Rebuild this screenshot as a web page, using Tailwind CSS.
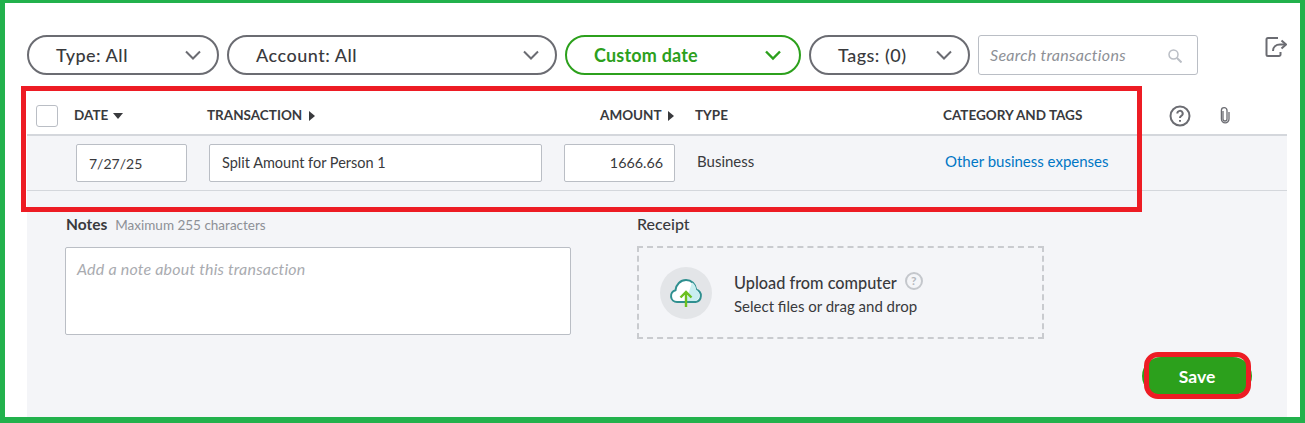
<!DOCTYPE html>
<html>

<head>
    <title>Transactions</title>
    <script src="https://cdn.jsdelivr.net/npm/@tailwindcss/browser@4"></script>
</head>

<body class="bg-white">
    <div class="relative w-[1305px] h-[423px] overflow-hidden flex flex-col bg-white border-t-[3px] border-l-[5px] border-r-[5px] border-b-[6px] border-[#22b14c] font-['Lato',sans-serif] text-[#393a3d]">
        <!-- filter bar -->
        <div class="flex items-start ml-[22px] mt-[32px] h-[40px]">
            <div class="w-[192px] h-[40px] mr-[8px] flex items-center justify-between pl-[27px] pr-[15px] rounded-full border-2 border-[#6b6c72] text-[18px] tracking-[0.5px] font-medium">
                <span>Type: All</span>
                <svg class="w-[18px] h-[18px]" viewBox="0 0 18 18" fill="none" stroke="#6b6c72" stroke-width="2"><path d="M2 5.500l7 7 7-7" /></svg>
            </div>
            <div class="w-[330px] h-[40px] mr-[8px] flex items-center justify-between pl-[27px] pr-[15px] rounded-full border-2 border-[#6b6c72] text-[18px] tracking-[0.5px] font-medium">
                <span>Account: All</span>
                <svg class="w-[18px] h-[18px]" viewBox="0 0 18 18" fill="none" stroke="#6b6c72" stroke-width="2"><path d="M2 5.500l7 7 7-7" /></svg>
            </div>
            <div class="w-[236px] h-[40px] mr-[8px] flex items-center justify-between pl-[27px] pr-[17px] rounded-full border-2 border-[#2ca01c] text-[18px] tracking-[0.2px] font-bold text-[#2ca01c]">
                <span>Custom date</span>
                <svg class="w-[18px] h-[18px]" viewBox="0 0 18 18" fill="none" stroke="#2ca01c" stroke-width="2.400"><path d="M2 5.500l7 7 7-7" /></svg>
            </div>
            <div class="w-[161px] h-[40px] mr-[8px] flex items-center justify-between pl-[27px] pr-[15px] rounded-full border-2 border-[#6b6c72] text-[18px] tracking-[0.5px] font-medium">
                <span>Tags: (0)</span>
                <svg class="w-[18px] h-[18px]" viewBox="0 0 18 18" fill="none" stroke="#6b6c72" stroke-width="2"><path d="M2 5.500l7 7 7-7" /></svg>
            </div>
            <div class="w-[220px] h-[40px] pb-[1px] flex items-center justify-between pl-[11px] pr-[15px] rounded-[3px] border border-[#babec5] text-[16px] tracking-[0.3px] italic text-[#8d9096]">
                <span>Search transactions</span>
                <svg class="w-[14px] h-[14px] mt-[2px]" viewBox="0 0 14 14" fill="none" stroke="#babec5" stroke-width="1.500"><circle cx="5.500" cy="5.500" r="4.500" /><path d="M9 9l4.500 4.500" stroke-width="2" /></svg>
            </div>
            <svg class="w-[22px] h-[22px] ml-[67px] mt-[1px]" viewBox="0 0 22 22" fill="none" stroke="#6b6c72" stroke-width="2"><path d="M13 2H3a1.500 1.500 0 0 0-1.500 1.500v15A1.500 1.500 0 0 0 3 20h11a1.500 1.500 0 0 0 1.500-1.500V16" /><path d="M8 15c0-4 3-6.500 7-6.500h5" /><path d="M16.500 4.500l4.500 4-4.500 4" /></svg>
        </div>

        <!-- table header -->
        <div class="ml-[22px] w-[1260px] h-[61px] pt-[22px] flex items-center border-b-2 border-[#d4d7dc] text-[13.500px] font-bold uppercase">
            <div class="w-[22px] h-[22px] ml-[9px] mr-[16px] rounded-[3px] border border-[#babec5] bg-white"></div>
            <div class="w-[133px] flex items-center gap-[5px]">Date <span class="w-0 h-0 border-x-[5px] border-x-transparent border-t-[6px] border-t-[#393a3d]"></span></div>
            <div class="w-[393px] flex items-center gap-[7px]">Transaction <span class="w-0 h-0 border-y-[5px] border-y-transparent border-l-[6px] border-l-[#393a3d]"></span></div>
            <div class="w-[95px] flex items-center gap-[6px]">Amount <span class="w-0 h-0 border-y-[5px] border-y-transparent border-l-[6px] border-l-[#393a3d]"></span></div>
            <div class="w-[248px]">Type</div>
            <div class="w-[226px] whitespace-nowrap">Category and tags</div>
            <svg class="w-[22px] h-[22px] mr-[27px]" viewBox="0 0 22 22" fill="none" stroke="#6b6c72" stroke-width="2"><circle cx="11" cy="11" r="9.500" /><path d="M8.300 8.500a2.700 2.700 0 1 1 4 2.400c-.9.5-1.300 1-1.300 2" /><path d="M11 15v1.800" /></svg>
            <svg class="w-[14px] h-[19px]" viewBox="0 0 14 19" fill="none" stroke="#6b6c72" stroke-width="1.300"><path d="M5 5v8a2 2 0 0 0 4 0V4.500a2.800 2.800 0 0 0-5.600 0V13a3.800 3.800 0 0 0 7.600 0V6" /></svg>
        </div>

        <!-- open row -->
        <div class="ml-[22px] w-[1260px] flex-1 bg-[#f4f5f8] flex flex-col">
            <div class="h-[55px] pt-[8px] pl-[49px] flex items-start border-b border-[#d4d7dc] text-[14.500px]">
                <div class="w-[111px] h-[38px] mr-[22px] pl-[12px] flex items-center bg-white border border-[#babec5] rounded-[2px] text-[14px]">7/27/25</div>
                <div class="w-[333px] h-[38px] mr-[22px] pl-[12px] pb-[1px] flex items-center bg-white border border-[#babec5] rounded-[2px]">Split Amount for Person 1</div>
                <div class="w-[111px] h-[38px] mr-[22px] pr-[11px] flex items-center justify-end bg-white border border-[#babec5] rounded-[2px] text-[14.300px]">1666.66</div>
                <div class="w-[248px] h-[34px] flex items-center text-[15px]">Business</div>
                <div class="h-[34px] flex items-center text-[15px] text-[#0077c5]">Other business expenses</div>
            </div>

            <div class="flex pl-[38px] pt-[24px]">
                <div class="w-[506px] mr-[66px]">
                    <div class="h-[18px] pt-[2px] flex items-center">
                        <span class="ml-[1px] text-[15.500px] font-bold">Notes</span>
                        <span class="ml-[8px] text-[13.500px] text-[#8d9096]">Maximum 255 characters</span>
                    </div>
                    <div class="mt-[14px] h-[88px] pl-[11px] pt-[9px] bg-white border border-[#babec5] rounded-[2px] text-[16px] tracking-[0.2px] italic text-[#a9abb0]">Add a note about this transaction</div>
                </div>
                <div class="w-[407px]">
                    <div class="h-[18px] flex items-center text-[16px] font-medium">Receipt</div>
                    <div class="mt-[13px] h-[93px] flex items-center pl-[21px] border-2 border-dashed border-[#c9cbcf]">
                        <div class="w-[52px] h-[52px] rounded-full bg-[#e3e5e8] flex items-center justify-center">
                            <svg class="w-[34px] h-[30px]" viewBox="0 0 34 30" fill="none">
                                <path d="M8 24a6 6 0 0 1-1.500-11.800C7 6.500 11.500 2 17 2s9.500 4 10.200 9.700A6.300 6.300 0 0 1 26.500 24z" fill="#ffffff" stroke="#2f8f8f" stroke-width="2" />
                                <path d="M23 4.500c2.500 1.500 4 4 4.200 7.200A6.300 6.300 0 0 1 26.500 23H17z" fill="#c9eef0" />
                                <path d="M17 29V14M11.500 19.500L17 14l5.500 5.500" stroke="#6cc01f" stroke-width="2.400" />
                            </svg>
                        </div>
                        <div class="ml-[22px] mt-[1px]">
                            <div class="flex items-center pt-[1px] text-[16.300px] font-medium leading-[20px]">Upload from computer
                                <span class="ml-[8px] w-[18px] h-[18px] mb-[4px] rounded-full border-2 border-[#c4c7cc] text-[12px] font-bold text-[#b5b8bd] flex items-center justify-center">?</span>
                            </div>
                            <div class="mt-[2px] text-[15px] leading-[20px]">Select files or drag and drop</div>
                        </div>
                    </div>
                </div>
            </div>

            <div class="flex justify-end pr-[35px] mt-[18px]">
                <button class="w-[110px] h-[38px] pt-[3px] rounded-full bg-[#2ca01c] text-white text-[17.500px] font-bold">Save</button>
            </div>
        </div>

        <!-- red annotations on top of the screenshot -->
        <div class="absolute left-[16px] top-[83px] w-[1121px] h-[126px] border-[5px] border-[#ed1c24]"></div>
        <div class="absolute left-[1139px] top-[349px] w-[107px] h-[47px] border-[5px] border-[#ed1c24] rounded-[14px]"></div>
    </div>
</body>

</html>
